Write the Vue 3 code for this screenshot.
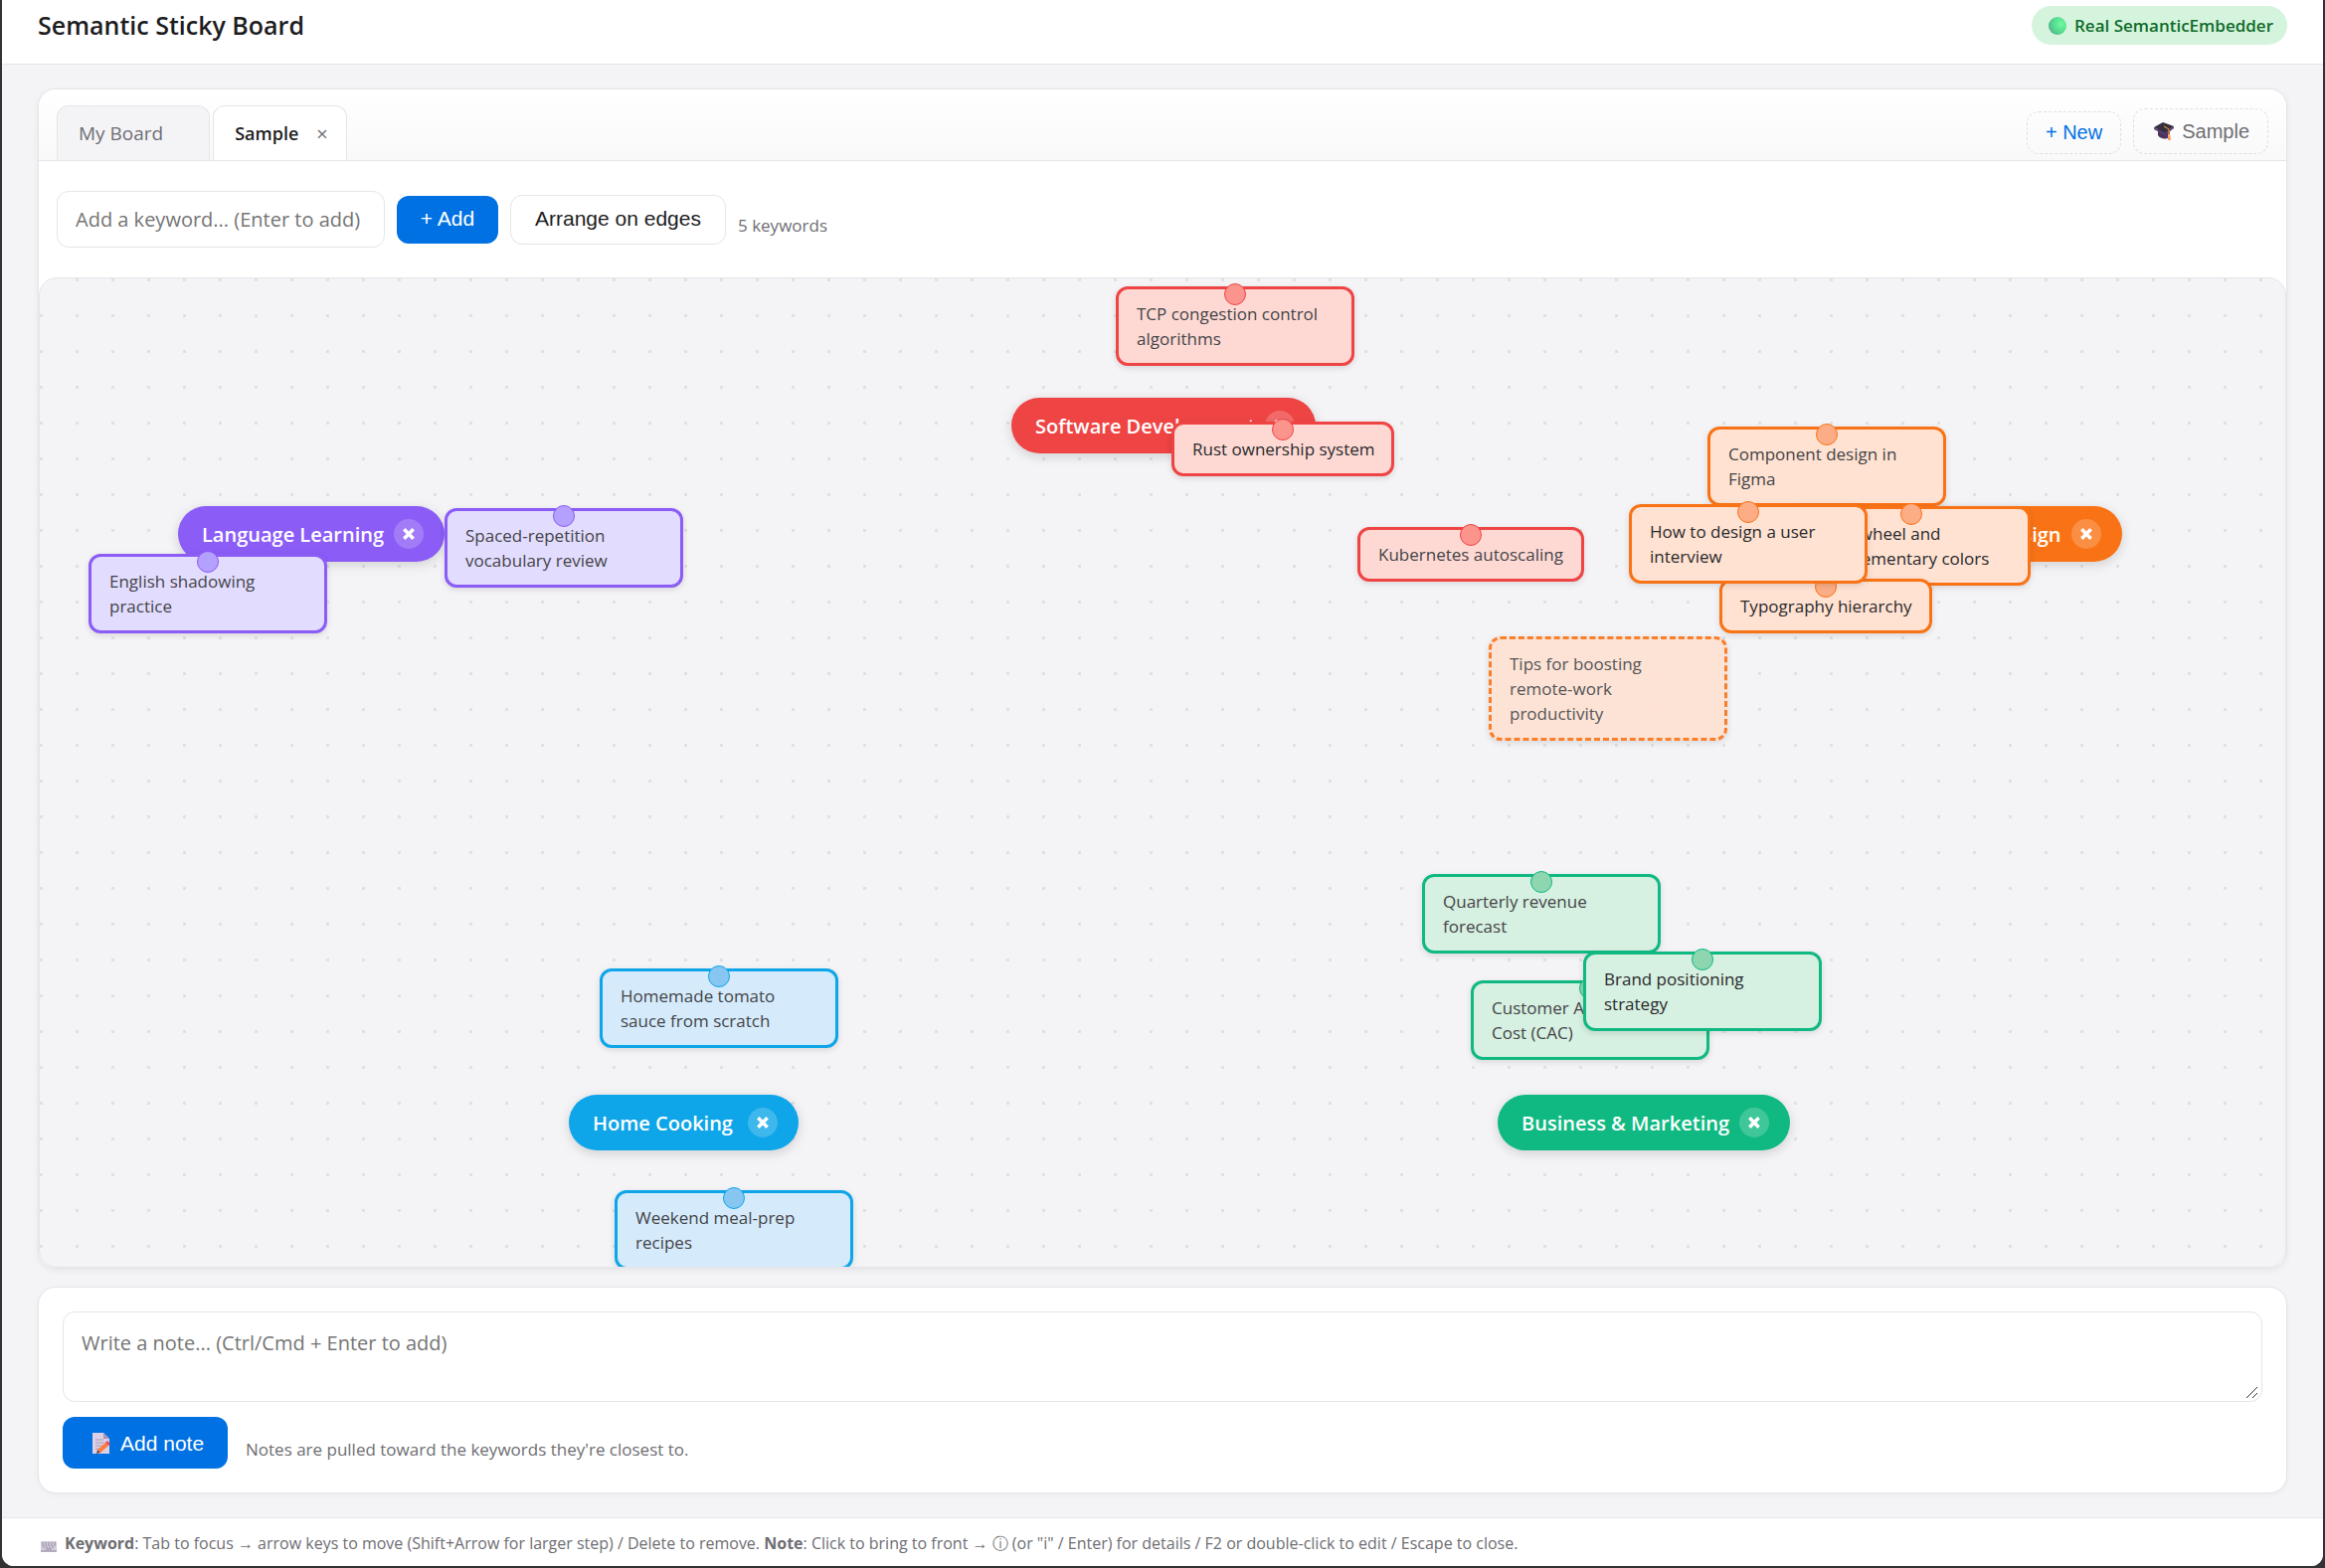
<script setup>
import { ref } from 'vue'

const keyword = ref('')
const note = ref('')

const keywords = [
  { text: 'Software Development', tone: 'red', x: 977, y: 120, w: 306 },
  { text: 'Language Learning', tone: 'purple', x: 139, y: 229, w: 268 },
  { text: 'UI/UX Design', tone: 'orange', x: 1882, y: 229, w: 212 },
  { text: 'Home Cooking', tone: 'blue', x: 532, y: 821, w: 231 },
  { text: 'Business & Marketing', tone: 'green', x: 1466, y: 821, w: 294 },
]

const notes = [
  { text: 'TCP congestion control\nalgorithms', tone: 'red', x: 1082, y: 8, w: 240 },
  { text: 'Rust ownership system', tone: 'red', x: 1138, y: 144, w: 224, strong: true },
  { text: 'Kubernetes autoscaling', tone: 'red', x: 1325, y: 250, w: 228 },
  { text: 'Component design in\nFigma', tone: 'orange', x: 1677, y: 149, w: 240 },
  { text: 'Color wheel and\ncomplementary colors', tone: 'orange', x: 1762, y: 229, w: 240, strong: true },
  { text: 'Typography hierarchy', tone: 'orange', x: 1689, y: 302, w: 214, strong: true },
  { text: 'How to design a user\ninterview', tone: 'orange', x: 1598, y: 227, w: 240, strong: true },
  { text: 'Tips for boosting\nremote-work\nproductivity', tone: 'orange', x: 1457, y: 360, w: 240, loose: true },
  { text: 'Quarterly revenue\nforecast', tone: 'green', x: 1390, y: 599, w: 240 },
  { text: 'Customer Acquisition\nCost (CAC)', tone: 'green', x: 1439, y: 706, w: 240 },
  { text: 'Brand positioning\nstrategy', tone: 'green', x: 1552, y: 677, w: 240, strong: true },
  { text: 'Homemade tomato\nsauce from scratch', tone: 'blue', x: 563, y: 694, w: 240 },
  { text: 'Weekend meal-prep\nrecipes', tone: 'blue', x: 578, y: 917, w: 240 },
  { text: 'English shadowing\npractice', tone: 'purple', x: 49, y: 277, w: 240 },
  { text: 'Spaced-repetition\nvocabulary review', tone: 'purple', x: 407, y: 231, w: 240 },
]

const place = (item) => ({ left: `${item.x}px`, top: `${item.y}px`, width: `${item.w}px` })
</script>

<template>
  <div class="window">
    <header class="header">
      <h1>Semantic Sticky Board</h1>
      <span class="badge"><i class="orb"></i>Real SemanticEmbedder</span>
    </header>

    <main class="main">
      <section class="board">
        <nav class="tabs">
          <div class="tab">
            <button type="button" class="tab-name">My Board</button>
          </div>
          <div class="tab active">
            <button type="button" class="tab-name">Sample</button>
            <button type="button" class="tab-close" aria-label="Close tab">×</button>
          </div>
          <div class="tab-actions">
            <button type="button" class="ghost new">+ New</button>
            <button type="button" class="ghost">
              <svg class="cap" viewBox="0 0 20 18" aria-hidden="true">
                <path d="M4 7v6c2 4 9 5 12 1V7z" fill="#4b3560" />
                <path d="M0 5 9 0l11 4-9 7z" fill="#37303f" />
                <path d="M0 5l11 6 9-7v2l-9 7L0 7z" fill="#594070" />
                <path d="M10 4l5 3v7" fill="none" stroke="#f2a640" stroke-width="1" />
                <path d="M14 12h2l1 6h-3z" fill="#ff9d5c" />
              </svg>
              Sample
            </button>
          </div>
        </nav>

        <div class="toolbar">
          <input v-model="keyword" class="field" type="text" aria-label="Keyword" placeholder="Add a keyword... (Enter to add)" />
          <button type="button" class="primary add">+ Add</button>
          <button type="button" class="secondary">Arrange on edges</button>
          <span class="count">5 keywords</span>
        </div>

        <div class="canvas">
          <div v-for="k in keywords" :key="k.text" class="keyword" :class="k.tone" :style="place(k)">
            <span>{{ k.text }}</span>
            <button type="button" class="remove" aria-label="Remove keyword">
              <svg viewBox="0 0 12 12" aria-hidden="true"><path d="M2 2l8 8M10 2l-8 8" /></svg>
            </button>
          </div>
          <article
            v-for="n in notes"
            :key="n.text"
            class="note"
            :class="[n.tone, { strong: n.strong, loose: n.loose }]"
            :style="place(n)"
          >{{ n.text }}</article>
        </div>
      </section>

      <section class="composer">
        <div class="area">
          <textarea v-model="note" aria-label="Note" placeholder="Write a note... (Ctrl/Cmd + Enter to add)"></textarea>
          <svg class="grip" viewBox="0 0 14 14" aria-hidden="true"><path d="M1 12 12 1M7 12l5-5" /></svg>
        </div>
        <div class="composer-row">
          <button type="button" class="primary add-note">
            <svg class="memo" viewBox="0 0 18 22" aria-hidden="true">
              <path d="M0 0h11l6 6v15H0z" fill="#dcd0e6" />
              <path d="M11 0l6 6h-6z" fill="#a697b5" />
              <path d="M3 7h8M3 10h9M3 13h7M3 16h3" stroke="#a99bb8" stroke-width="1" />
              <path d="M5 17l8-7 3 3-8 7z" fill="#ff7d3c" />
              <path d="M13 10l2-2 3 3-2 2z" fill="#f0455f" />
              <path d="M4 21l1-4 3 3z" fill="#6b4a3c" />
            </svg>
            Add note
          </button>
          <span class="hint">Notes are pulled toward the keywords they're closest to.</span>
        </div>
      </section>
    </main>

    <footer class="footer">
      <svg class="keyboard" viewBox="0 0 16 11" aria-hidden="true">
        <rect width="16" height="11" rx="1" fill="#d3cbdb" />
        <rect y="9" width="16" height="2" fill="#b5abc0" />
        <path d="M1 2h14M1 4h14M2 6h12" stroke="#94899f" stroke-width="1" stroke-dasharray="2 1" />
        <path d="M5 8h6" stroke="#8f849b" />
      </svg>
      <p>
        <b>Keyword</b>: Tab to focus → arrow keys to move (Shift+Arrow for larger step) / Delete to remove.
        <b>Note</b>: Click to bring to front → ⓘ (or "i" / Enter) for details / F2 or double-click to edit / Escape to close.
      </p>
    </footer>
  </div>
</template>

<style>
body {
  margin: 0;
  background: #333;
}
</style>

<style scoped>
* {
  box-sizing: border-box;
}
.window {
  display: flex;
  flex-direction: column;
  min-height: calc(100vh - 2px);
  margin: 0 2px;
  border-radius: 0 0 12px 12px;
  overflow: hidden;
  background: #f4f4f7;
  color: #1d1d1f;
  font-family: "Open Sans", "Noto Sans", sans-serif;
  font-size: 17px;
}
button {
  padding: 0;
  border: 0;
  background: none;
  color: inherit;
  font: inherit;
  cursor: pointer;
}
.header {
  display: flex;
  justify-content: space-between;
  align-items: flex-start;
  padding: 6px 36px 19px;
  border-bottom: 1px solid #e5e5ea;
  background: #fff;
}
h1 {
  margin: 0;
  font-size: 25px;
  line-height: 39px;
  font-weight: 600;
}
.badge {
  display: flex;
  align-items: center;
  gap: 8px;
  padding: 0 14px 0 17px;
  border-radius: 20px;
  background: #d5f4de;
  color: #0f6b29;
  font-weight: 600;
  line-height: 39px;
}
.orb {
  width: 18px;
  height: 18px;
  border-radius: 50%;
  background: radial-gradient(circle at 70% 40%, #6dfb9f, #55d98f 50%, #558f8a);
}
.main {
  flex: 1;
  display: flex;
  flex-direction: column;
  gap: 18px;
  padding: 24px 36px;
}
.board {
  flex: 1;
  display: flex;
  flex-direction: column;
  border: 1px solid #e5e5ea;
  border-radius: 18px;
  background: #fff;
  box-shadow: 0 2px 6px rgba(0, 0, 0, 0.06);
}
.tabs {
  display: flex;
  align-items: flex-end;
  gap: 3px;
  padding: 16px 18px 0;
  border-bottom: 1px solid #e5e5ea;
  border-radius: 18px 18px 0 0;
  background: linear-gradient(#fff, #f9f9fa);
}
.tab {
  display: flex;
  align-items: center;
  height: 55px;
  padding: 0 48px 0 21px;
  border: 1px solid #e5e5ea;
  border-bottom: 0;
  border-radius: 12px 12px 0 0;
  background: #f4f4f7;
  color: #6e6e73;
  font-size: 19px;
}
.tab:not(.active) {
  padding-right: 46px;
}
.tab.active {
  padding: 0 18px 0 21px;
  background: #fff;
  color: #1d1d1f;
  font-weight: 600;
  font-size: 18px;
}
.tab-close {
  margin-left: 18px;
  color: #6e6e73;
  font-weight: 400;
  font-size: 20px;
}
.tab-actions {
  display: flex;
  align-items: center;
  gap: 12px;
  margin-left: auto;
  padding-bottom: 6px;
}
.ghost {
  display: flex;
  align-items: center;
  gap: 8px;
  height: 46px;
  padding: 0 18px 0 20px;
  border: 1px dashed #e0e0e4;
  border-radius: 12px;
  color: #6e6e73;
  font: 20px "Liberation Sans", sans-serif;
}
.ghost.new {
  height: 43px;
  padding: 0 18px;
  color: #0071e3;
  align-self: flex-end;
}
.cap {
  width: 20px;
  height: 18px;
}
.toolbar {
  display: flex;
  align-items: center;
  gap: 12px;
  padding: 30px 18px;
}
.field {
  width: 330px;
  height: 57px;
  padding: 0 18px;
  border: 1px solid #e5e5ea;
  border-radius: 12px;
  background: #fff;
  color: #1d1d1f;
  font: 20px "Open Sans", "Noto Sans", sans-serif;
}
.field::placeholder,
textarea::placeholder {
  color: #757575;
}
.primary,
.secondary {
  padding-bottom: 2px;
  border-radius: 12px;
  font: 21px "Liberation Sans", sans-serif;
}
.primary {
  background: #0071e3;
  color: #fff;
}
.add {
  width: 102px;
  height: 48px;
}
.secondary {
  width: 217px;
  height: 50px;
  border: 1px solid #e5e5ea;
  background: #fff;
}
.count {
  padding-top: 12px;
  color: #6e6e73;
}
.canvas {
  position: relative;
  flex: 1;
  overflow: hidden;
  border: 1px solid #e5e5ea;
  border-radius: 18px;
  background: conic-gradient(from 270deg at 3px 3px, #e1e1e4 90deg, transparent 0) 0 0 / 36px 36px #f4f4f7;
}
.red { --main: #ef4444; --tint: #fed9d4; --pin: #fc948e; }
.orange { --main: #f97316; --tint: #ffe2d2; --pin: #fdad85; }
.green { --main: #10b981; --tint: #d6f0e1; --pin: #8dd6b0; }
.blue { --main: #0ea5e9; --tint: #d5ebfc; --pin: #88c6f2; }
.purple { --main: #8b5cf6; --tint: #e2dcff; --pin: #b3a0ff; }
.keyword {
  position: absolute;
  display: flex;
  align-items: center;
  justify-content: space-between;
  height: 56px;
  padding: 0 21px 0 24px;
  border-radius: 28px;
  background: var(--main);
  box-shadow: 0 3px 12px rgba(0, 0, 0, 0.15);
  color: #fff;
  font-size: 20px;
  font-weight: 600;
  white-space: nowrap;
}
.remove {
  display: grid;
  place-items: center;
  width: 30px;
  height: 30px;
  border-radius: 50%;
  background: rgba(255, 255, 255, 0.2);
}
.remove svg {
  width: 14px;
  height: 14px;
  fill: none;
  stroke: #fff;
  stroke-width: 3;
}
.note {
  position: absolute;
  padding: 12px 18px;
  border: 3px solid var(--main);
  border-radius: 12px;
  background: var(--tint);
  box-shadow: 0 2px 6px rgba(0, 0, 0, 0.12);
  color: #444447;
  line-height: 25px;
  white-space: pre;
}
.note.strong {
  color: #29292b;
}
.note.loose {
  border-style: dashed;
  opacity: 0.9;
}
.note::before {
  content: "";
  position: absolute;
  top: -6px;
  left: calc(50% - 11px);
  width: 20px;
  height: 20px;
  border: 1px solid var(--main);
  border-radius: 50%;
  background: var(--pin);
}
.note.loose::before {
  display: none;
}
.composer {
  padding: 24px;
  border: 1px solid #e5e5ea;
  border-radius: 18px;
  background: #fff;
  box-shadow: 0 2px 6px rgba(0, 0, 0, 0.04);
}
.area {
  position: relative;
  display: flex;
}
textarea {
  flex: 1;
  height: 91px;
  padding: 17px 18px;
  border: 1px solid #e5e5ea;
  border-radius: 12px;
  background: #fff;
  color: #1d1d1f;
  font: 20px/28px "Open Sans", "Noto Sans", sans-serif;
  resize: none;
}
.grip {
  position: absolute;
  right: 3px;
  bottom: 2px;
  width: 14px;
  height: 14px;
  fill: none;
  stroke: #333;
}
.composer-row {
  display: flex;
  align-items: center;
  gap: 18px;
  padding: 15px 0 0;
}
.add-note {
  display: flex;
  align-items: center;
  gap: 10px;
  width: 166px;
  height: 52px;
  padding: 2px 0 0 30px;
}
.memo {
  width: 18px;
  height: 22px;
}
.hint {
  padding-top: 12px;
  color: #6e6e73;
}
.footer {
  display: flex;
  align-items: center;
  gap: 8px;
  height: 49px;
  padding: 3px 40px 0 39px;
  border-top: 1px solid #e5e5ea;
  background: #fff;
  color: #6e6e73;
  font-size: 16px;
}
.footer p {
  margin: 0;
}
.footer b {
  font-weight: 700;
}
.keyboard {
  width: 16px;
  height: 11px;
  margin-top: 6px;
}
</style>
